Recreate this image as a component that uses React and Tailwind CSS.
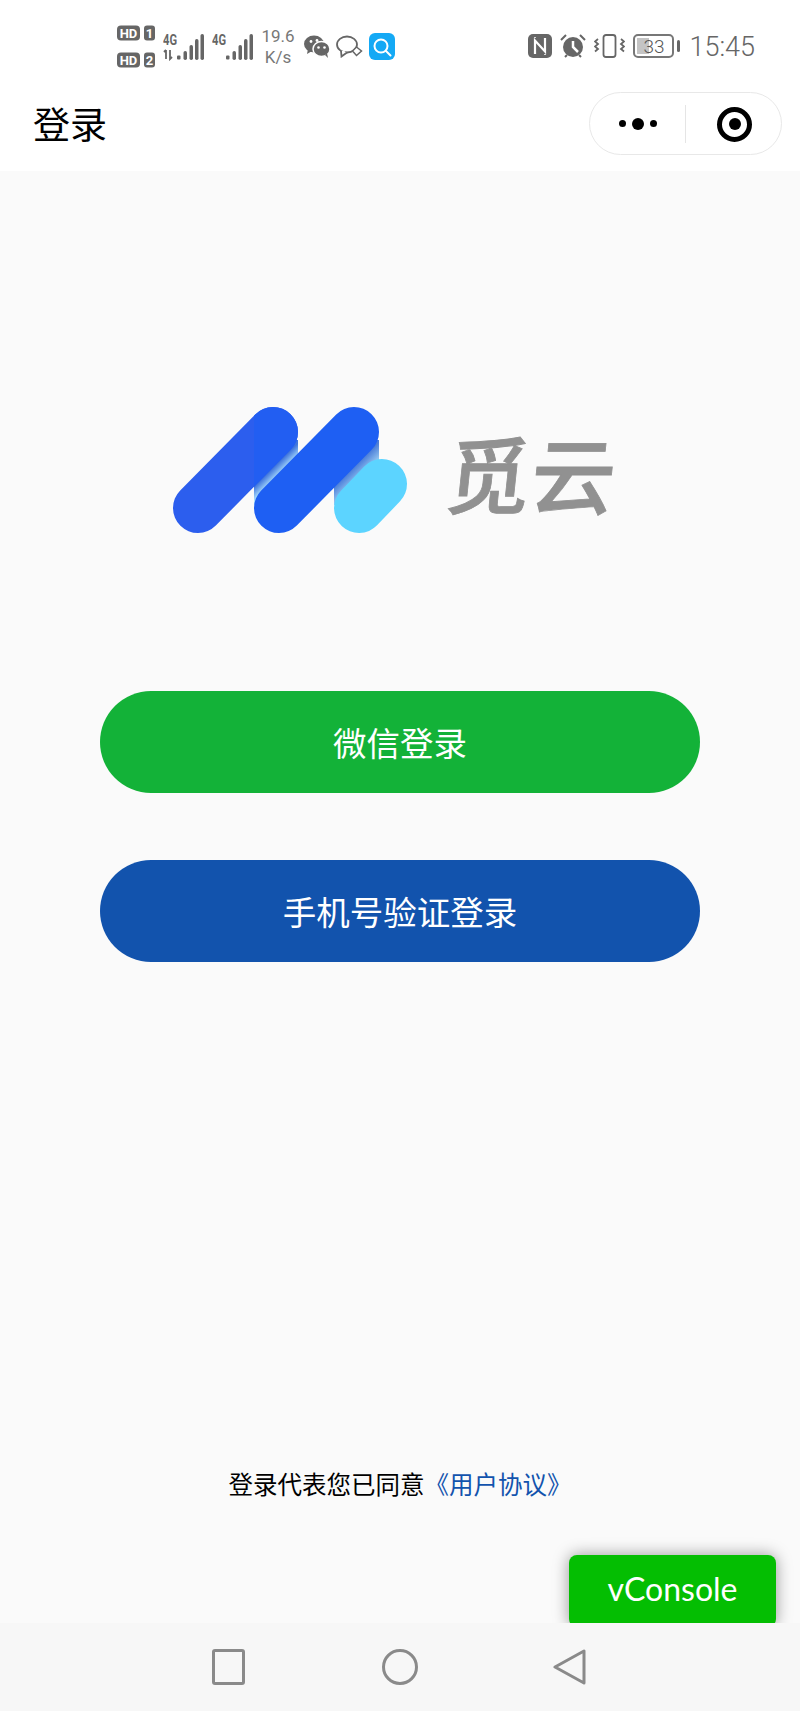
const cjk = { fontFamily: '"Noto Sans CJK SC", "Liberation Sans", sans-serif' }

const HdBadge = ({ n }) => (
  <svg width="38" height="16" viewBox="0 0 38 16">
    <rect x="0" y="0.5" width="23" height="15" rx="4" fill="#666" />
    <text x="11.5" y="13" textAnchor="middle" fontSize="13" fontWeight="700" fill="#fff" fontFamily="Roboto, sans-serif">HD</text>
    <rect x="27" y="0.5" width="11" height="15" rx="3" fill="#666" />
    <text x="32.5" y="13" textAnchor="middle" fontSize="13" fontWeight="700" fill="#fff" fontFamily="Roboto, sans-serif">{n}</text>
  </svg>
)

const Signal = ({ arrows }) => (
  <svg width="41" height="28" viewBox="0 0 41 28">
    <text x="0" y="12" fontSize="14" fontWeight="700" fill="#666" fontFamily="Roboto, sans-serif" textLength="14" lengthAdjust="spacingAndGlyphs">4G</text>
    {arrows && <path d="M3 17v9M1 19l2-2M7 17v9l2-2" stroke="#666" strokeWidth="1.8" fill="none" />}
    <rect x="14" y="22.500" width="3.500" height="4" rx="1" fill="#666" />
    <rect x="20.500" y="18" width="3.500" height="9" rx="1.700" fill="#666" />
    <rect x="26.500" y="12" width="3.500" height="15" rx="1.700" fill="#666" />
    <rect x="32" y="6" width="3.500" height="21" rx="1.700" fill="#666" />
    <rect x="37.500" y="1" width="3.500" height="26" rx="1.700" fill="#666" />
  </svg>
)

const WechatIcon = () => (
  <svg width="26" height="23" viewBox="0 0 26 23">
    <ellipse cx="10" cy="9" rx="10" ry="8.5" fill="#666" />
    <path d="M4 14l-1 5 5-3z" fill="#666" />
    <ellipse cx="17.5" cy="14" rx="8.5" ry="7.5" fill="#666" stroke="#fff" strokeWidth="1.5" />
    <path d="M21 20l3 3-1-5z" fill="#666" />
    <circle cx="7" cy="6.5" r="1.4" fill="#fff" />
    <circle cx="13" cy="5.5" r="1.4" fill="#fff" />
    <circle cx="14.5" cy="12.5" r="1.3" fill="#fff" />
    <circle cx="20.5" cy="12.5" r="1.3" fill="#fff" />
  </svg>
)

const ChatIcon = () => (
  <svg width="27" height="23" viewBox="0 0 27 23" fill="none" stroke="#666" strokeWidth="1.8">
    <ellipse cx="11" cy="9.500" rx="10" ry="8" />
    <path d="M5 15.500L5.500 21.500L11 17.500" fill="#fff" stroke="#666" />
    <path d="M6 15.800L6.500 18.500L9.500 16.500" fill="#fff" stroke="none" />
    <path d="M20.500 12L25.500 16L20.500 20.500L16.500 16Z" strokeWidth="1.500" fill="#fff" />
  </svg>
)

const SearchIcon = () => (
  <div className="w-[26px] h-[27px] rounded-[6px] bg-[#14a9f5] flex items-center justify-center">
    <svg width="20" height="20" viewBox="0 0 20 20" fill="none" stroke="#fff" strokeWidth="2">
      <circle cx="9" cy="9" r="6.500" />
      <path d="M14 14l4.500 4.500" strokeLinecap="round" />
    </svg>
  </div>
)

const NfcIcon = () => (
  <svg width="24" height="24" viewBox="0 0 24 24">
    <rect x="0" y="0" width="24" height="24" rx="5" fill="#666" />
    <path d="M7 20V6.500L17 17.500V4" stroke="#fff" strokeWidth="2.200" fill="none" />
    <path d="M7 3v1M17 20v1" stroke="#fff" strokeWidth="1.500" />
  </svg>
)

const AlarmIcon = () => (
  <svg width="26" height="26" viewBox="0 0 26 26">
    <circle cx="13" cy="14" r="10" fill="#666" />
    <path d="M13 8v6l5 5" stroke="#fff" strokeWidth="2.500" fill="none" />
    <path d="M1 7l5-5M25 7l-5-5M5 24l2-2M21 24l-2-2" stroke="#666" strokeWidth="2" fill="none" />
  </svg>
)

const VibrateIcon = () => (
  <svg width="31" height="24" viewBox="0 0 31 24" fill="none" stroke="#666" strokeWidth="1.800">
    <rect x="9.500" y="1" width="12" height="22" rx="2.500" />
    <path d="M4 5l-3 2.500 3 2.500-3 2.500 3 2.500-3 2.500M27 5l3 2.500-3 2.500 3 2.500-3 2.500 3 2.500" />
  </svg>
)

const Battery = () => (
  <div className="flex items-center gap-[3px]">
    <div className="relative w-[41px] h-[24px] rounded-[5px] border-2 border-[#777] flex items-center justify-center overflow-hidden">
      <div className="absolute left-[2px] top-[2px] bottom-[2px] w-[12px] bg-[#c4c4c4]" />
      <span className="relative text-[19px] leading-none text-[#555] font-['Roboto'] font-light">33</span>
    </div>
    <div className="w-[3px] h-[12px] rounded-full bg-[#666]" />
  </div>
)

const Logo = () => (
  <svg width="240" height="130" viewBox="0 0 240 130">
    <defs>
      <linearGradient id="band1" gradientUnits="userSpaceOnUse" x1="100" y1="66" x2="107" y2="73">
        <stop offset="0" stopColor="#3f74dc" />
        <stop offset="1" stopColor="#b0e4ff" />
      </linearGradient>
      <linearGradient id="band2" gradientUnits="userSpaceOnUse" x1="180" y1="66" x2="192" y2="78">
        <stop offset="0" stopColor="#4a7cd8" />
        <stop offset="1" stopColor="#b4e6fc" />
      </linearGradient>
      <clipPath id="rightPart">
        <rect x="84" y="0" width="60" height="130" />
      </clipPath>
    </defs>
    <rect x="84" y="35" width="44" height="65" fill="url(#band1)" />
    <rect x="164" y="35" width="45" height="65" fill="url(#band2)" />
    <line x1="28" y1="103" x2="103" y2="27" stroke="#2c5eee" strokeWidth="50" strokeLinecap="round" />
    <line x1="28" y1="103" x2="103" y2="27" stroke="#225ef2" strokeWidth="50" strokeLinecap="round" clipPath="url(#rightPart)" />
    <line x1="189" y1="103" x2="212" y2="79" stroke="#5cd4ff" strokeWidth="50" strokeLinecap="round" />
    <line x1="109" y1="103" x2="184" y2="27" stroke="#1e5ff3" strokeWidth="50" strokeLinecap="round" />
  </svg>
)

export default function App() {
  return (
    <div className="relative w-[800px] h-[1711px] flex flex-col bg-[#fafafa] overflow-hidden" style={cjk}>
      {/* Phone status bar */}
      <div className="h-[92px] shrink-0 bg-white flex items-start justify-between pt-[25px] pl-[117px] pr-[45px]">
        <div className="flex items-center gap-[8px]">
          <div className="flex flex-col gap-[11px]">
            <HdBadge n="1" />
            <HdBadge n="2" />
          </div>
          <Signal arrows />
          <Signal />
          <div className="w-[34px] text-[17px] leading-[21px] text-[#777] text-center font-['Roboto']">
            <div>19.6</div>
            <div>K/s</div>
          </div>
          <div className="flex items-center gap-[6px] ml-[1px]">
            <WechatIcon />
            <ChatIcon />
            <SearchIcon />
          </div>
        </div>
        <div className="flex items-center gap-[8px] h-[42px]">
          <NfcIcon />
          <AlarmIcon />
          <VibrateIcon />
          <Battery />
          <span className="ml-[1px] pt-[3px] text-[27px] leading-none text-[#666] font-['Roboto'] font-light">15:45</span>
        </div>
      </div>

      {/* Title bar */}
      <div className="h-[79px] shrink-0 bg-white flex items-start justify-between pl-[33px] pr-[18px]">
        <h1 className="text-[37px] leading-[63px] text-black">登录</h1>
        <div className="w-[193px] h-[63px] rounded-full border-[1.5px] border-[#e8e8e8] bg-white flex items-center">
          <div className="w-[95px] shrink-0 flex items-center justify-center gap-[6px]">
            <span className="w-[7px] h-[7px] rounded-full bg-black" />
            <span className="w-[12px] h-[12px] rounded-full bg-black" />
            <span className="w-[7px] h-[7px] rounded-full bg-black" />
          </div>
          <div className="w-px h-[38px] bg-[#e5e5e5]" />
          <div className="flex-1 flex items-center justify-center pl-[2px] pt-[1px]">
            <div className="w-[35px] h-[35px] rounded-full border-[5px] border-black flex items-center justify-center">
              <span className="w-[12px] h-[12px] rounded-full bg-black" />
            </div>
          </div>
        </div>
      </div>

      {/* Page */}
      <div className="flex-1 flex flex-col items-center">
        <div className="mt-[234px] w-full flex items-start pl-[170px]">
          <Logo />
          <span className="ml-[37px] mt-[17px] text-[84px] leading-[100px] tracking-[1px] font-medium text-[#919191] -skew-x-6 whitespace-nowrap [-webkit-text-stroke:0.8px_#919191]">觅云</span>
        </div>
        <button className="mt-[156px] w-[600px] h-[102px] rounded-full bg-[#13b238] text-white text-[33.5px]">微信登录</button>
        <button className="mt-[67px] w-[600px] h-[102px] rounded-full bg-[#1253ad] text-white text-[33.5px]">手机号验证登录</button>
        <p className="mt-[504px] text-[24.5px] leading-[36px] text-black">
          登录代表您已同意<span className="text-[#1253ad]">《用户协议》</span>
        </p>
      </div>

      {/* Android nav bar */}
      <div className="relative z-10 h-[88px] shrink-0 bg-[#f7f7f7] flex items-start justify-center gap-[135px] pt-[26px] pr-[2px]">
        <div className="w-[33px] h-[36px] mr-[2px] rounded-[3px] border-[3px] border-[#8a8a8a]" />
        <div className="w-[36px] h-[36px] rounded-full border-[3px] border-[#8a8a8a]" />
        <svg width="33" height="36" viewBox="0 0 33 36" fill="none" stroke="#8a8a8a" strokeWidth="3" strokeLinejoin="round">
          <path d="M31 2V34L2 18Z" />
        </svg>
      </div>

      <div className="absolute left-[569px] top-[1555px] w-[207px] h-[72px] rounded-[8px] bg-[#04be02] shadow-[0_0_16px_rgba(0,0,0,0.4)] flex items-center justify-center text-white text-[32px] font-['Lato'] pb-[5px]">
        vConsole
      </div>
    </div>
  )
}
